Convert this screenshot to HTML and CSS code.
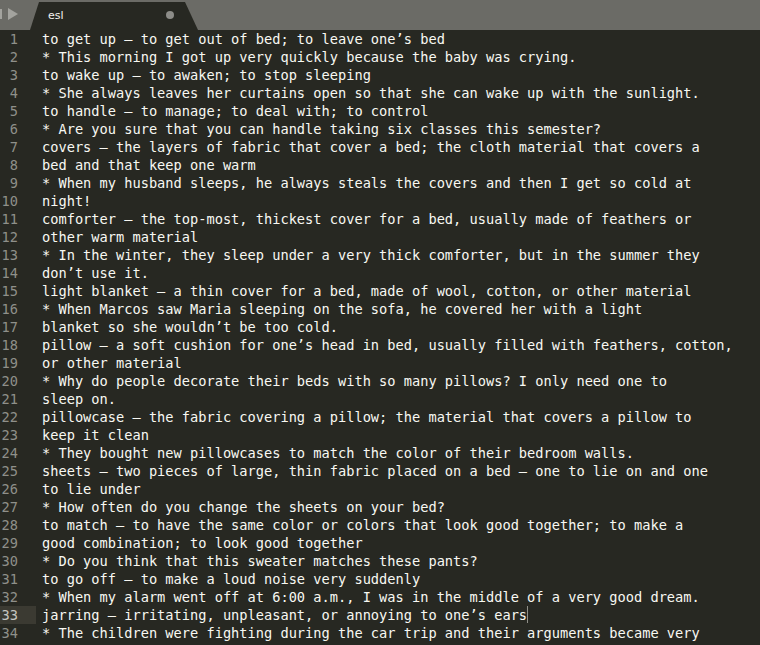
FILE: index.html
```html
<!DOCTYPE html>
<html>
<head>
  <title>esl</title>
  <link rel="stylesheet" href="styles.css">
</head>
<body>
  <div class="window">
    <div class="tabbar">
      <div class="side">
        <span class="bar"></span>
        <svg width="10" height="12" viewBox="0 0 10 12"><path d="M0 0 L10 6 L0 12 Z" fill="#a3a39e"/></svg>
      </div>
      <div class="tab">
        <span class="tab-name">esl</span>
        <span class="dot"></span>
      </div>
    </div>

    <div class="editor" id="editor"></div>
  </div>

  <script>
    const lines = [
      'to get up \u2013 to get out of bed; to leave one\u2019s bed',
      '* This morning I got up very quickly because the baby was crying.',
      'to wake up \u2013 to awaken; to stop sleeping',
      '* She always leaves her curtains open so that she can wake up with the sunlight.',
      'to handle \u2013 to manage; to deal with; to control',
      '* Are you sure that you can handle taking six classes this semester?',
      'covers \u2013 the layers of fabric that cover a bed; the cloth material that covers a',
      'bed and that keep one warm',
      '* When my husband sleeps, he always steals the covers and then I get so cold at',
      'night!',
      'comforter \u2013 the top-most, thickest cover for a bed, usually made of feathers or',
      'other warm material',
      '* In the winter, they sleep under a very thick comforter, but in the summer they',
      'don\u2019t use it.',
      'light blanket \u2013 a thin cover for a bed, made of wool, cotton, or other material',
      '* When Marcos saw Maria sleeping on the sofa, he covered her with a light',
      'blanket so she wouldn\u2019t be too cold.',
      'pillow \u2013 a soft cushion for one\u2019s head in bed, usually filled with feathers, cotton,',
      'or other material',
      '* Why do people decorate their beds with so many pillows? I only need one to',
      'sleep on.',
      'pillowcase \u2013 the fabric covering a pillow; the material that covers a pillow to',
      'keep it clean',
      '* They bought new pillowcases to match the color of their bedroom walls.',
      'sheets \u2013 two pieces of large, thin fabric placed on a bed \u2013 one to lie on and one',
      'to lie under',
      '* How often do you change the sheets on your bed?',
      'to match \u2013 to have the same color or colors that look good together; to make a',
      'good combination; to look good together',
      '* Do you think that this sweater matches these pants?',
      'to go off \u2013 to make a loud noise very suddenly',
      '* When my alarm went off at 6:00 a.m., I was in the middle of a very good dream.',
      'jarring \u2013 irritating, unpleasant, or annoying to one\u2019s ears',
      '* The children were fighting during the car trip and their arguments became very'
    ];
    const current = 33;

    const editor = document.getElementById('editor');
    lines.forEach((text, i) => {
      const row = document.createElement('div');
      row.className = 'row';
      const num = document.createElement('span');
      num.className = 'num' + (i + 1 === current ? ' active' : '');
      num.textContent = i + 1;
      const code = document.createElement('span');
      code.className = 'code';
      code.textContent = text;
      if (i + 1 === current) {
        const caret = document.createElement('span');
        caret.className = 'caret';
        code.appendChild(caret);
      }
      row.appendChild(num);
      row.appendChild(code);
      editor.appendChild(row);
    });
  </script>
</body>
</html>
```

FILE: styles.css
```css
body {
  margin: 0;
  background: #272822;
  overflow: hidden;
}
.window {
  width: 760px;
  height: 645px;
  display: flex;
  flex-direction: column;
  overflow: hidden;
}
.tabbar {
  height: 30px;
  background: #6b6b66;
  display: flex;
  align-items: flex-end;
  flex-shrink: 0;
}
.side {
  width: 30px;
  height: 30px;
  display: flex;
  align-items: center;
  gap: 6px;
}
.side svg {
  margin-top: -2px;
}
.bar {
  width: 2px;
  height: 10px;
  margin-top: -2px;
  background: #a3a39e;
}
.tab {
  width: 168px;
  height: 28px;
  background: #272822;
  clip-path: polygon(0 100%, 9px 0, 155px 0, 100% 100%);
  display: flex;
  align-items: center;
  justify-content: space-between;
  padding: 0 24px 2px 18px;
  box-sizing: border-box;
}
.tab-name {
  font-family: "DejaVu Sans", sans-serif;
  font-size: 11px;
  color: #f2f2ee;
}
.dot {
  width: 8px;
  height: 8px;
  border-radius: 50%;
  background: #8c8c88;
}
.editor {
  flex: 1;
  font-family: "DejaVu Sans Mono", monospace;
  font-size: 13.67px;
  line-height: 18px;
  color: #f8f8f2;
}
.row {
  display: flex;
  height: 18px;
  white-space: pre;
}
.num {
  width: 36px;
  padding-right: 18px;
  box-sizing: border-box;
  text-align: right;
  color: #8f908a;
  flex-shrink: 0;
}
.num.active {
  background: #3b3a32;
  color: #c5c5c0;
}
.code {
  padding-left: 6px;
}
.caret {
  display: inline-block;
  width: 1px;
  height: 17px;
  vertical-align: top;
  background: #8f8f88;
}
```
